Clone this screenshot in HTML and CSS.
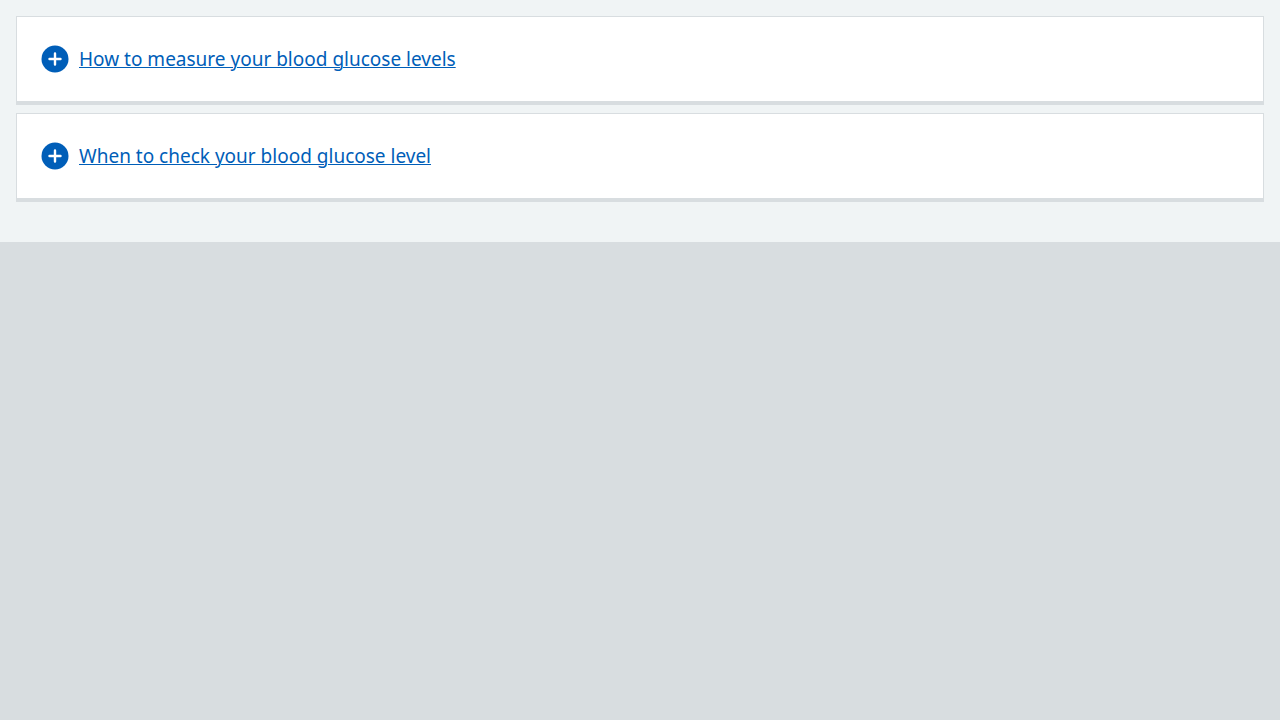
FILE: index.html
```html
<!DOCTYPE html>
<html lang="en">
<head>
<meta charset="utf-8">
<meta name="viewport" content="width=device-width, initial-scale=1">
<title>Blood glucose levels</title>
<link rel="stylesheet" href="styles.css">
</head>
<body>
<main class="expander-group">
  <details class="expander">
    <summary class="expander-summary">
      <svg class="expander-icon" viewBox="0 0 28 28" aria-hidden="true">
        <circle cx="14" cy="14" r="13.5"/>
        <path d="M14 8.5v11M8.5 14h11"/>
      </svg>
      <span class="expander-text">How to measure your blood glucose levels</span>
    </summary>
  </details>
  <details class="expander">
    <summary class="expander-summary">
      <svg class="expander-icon" viewBox="0 0 28 28" aria-hidden="true">
        <circle cx="14" cy="14" r="13.5"/>
        <path d="M14 8.5v11M8.5 14h11"/>
      </svg>
      <span class="expander-text">When to check your blood glucose level</span>
    </summary>
  </details>
</main>
</body>
</html>
```
FILE: styles.css
```css
html {
  background: #d8dde0;
}

body {
  margin: 0;
  font-family: "Frutiger W01", "Noto Sans", sans-serif;
  font-size: 19px;
  line-height: 28px;
}

.expander-group {
  display: flex;
  flex-direction: column;
  gap: 8px;
  padding: 16px 16px 40px;
  background: #f0f4f5;
}

.expander {
  background: #fff;
  border: 1px solid #d8dde0;
  border-bottom-width: 4px;
}

.expander-summary {
  display: flex;
  align-items: center;
  gap: 10px;
  padding: 28px 24px;
  color: #005eb8;
  cursor: pointer;
  list-style: none;
}

.expander-text {
  text-decoration: underline;
  text-decoration-thickness: 1px;
}

.expander-icon {
  flex: none;
  width: 28px;
  height: 28px;
  fill: #005eb8;
}

.expander-icon path {
  stroke: #fff;
  stroke-width: 2.4;
  stroke-linecap: round;
}
```
